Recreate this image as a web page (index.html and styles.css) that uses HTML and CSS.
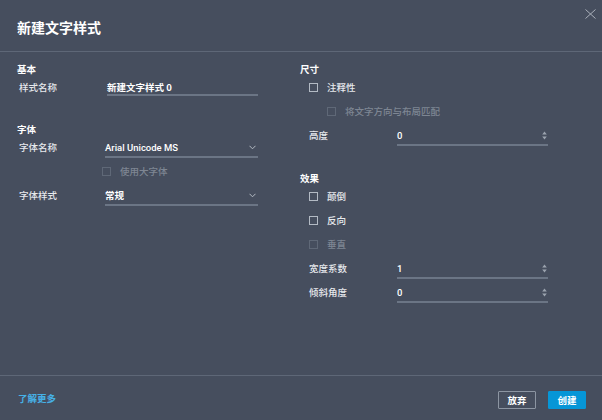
FILE: index.html
```html
<!DOCTYPE html>
<html lang="zh-CN">
<head>
<meta charset="utf-8">
<title>新建文字样式</title>
<link rel="stylesheet" href="styles.css">
</head>
<body>
<div class="dialog">
  <header class="head">
    <h1 class="title">新建文字样式</h1>
    <button class="close" aria-label="关闭">
      <svg width="11" height="10" viewBox="0 0 11 10"><path d="M0.5 0.5 L10.5 9.5 M10.5 0.5 L0.5 9.5" stroke="#a9b0ba" stroke-width="1" fill="none"/></svg>
    </button>
  </header>
  <main class="body">
    <div class="col left">
      <section class="sec">
        <div class="sec-title">基本</div>
        <div class="row">
          <span class="label">样式名称</span>
          <div class="field text"><span class="val">新建文字样式 0</span></div>
        </div>
      </section>
      <section class="sec">
        <div class="sec-title">字体</div>
        <div class="row">
          <span class="label">字体名称</span>
          <div class="field tall select"><span class="val latin">Arial Unicode MS</span>
            <svg class="chev" width="7" height="5" viewBox="0 0 7 5"><path d="M0.5 0.8 L3.5 3.8 L6.5 0.8" stroke="#b4bbc4" stroke-width="1" fill="none"/></svg>
          </div>
        </div>
        <div class="row check-row sub-left">
          <span class="cb disabled"></span><span class="cb-text disabled">使用大字体</span>
        </div>
        <div class="row">
          <span class="label">字体样式</span>
          <div class="field tall select"><span class="val">常规</span>
            <svg class="chev" width="7" height="5" viewBox="0 0 7 5"><path d="M0.5 0.8 L3.5 3.8 L6.5 0.8" stroke="#b4bbc4" stroke-width="1" fill="none"/></svg>
          </div>
        </div>
      </section>
    </div>
    <div class="col right">
      <section class="sec">
        <div class="sec-title">尺寸</div>
        <div class="row check-row">
          <span class="cb"></span><span class="cb-text">注释性</span>
        </div>
        <div class="row check-row sub-right">
          <span class="cb disabled"></span><span class="cb-text disabled">将文字方向与布局匹配</span>
        </div>
        <div class="row">
          <span class="label">高度</span>
          <div class="field tall"><span class="val latin">0</span>
            <svg class="spin" width="5" height="9" viewBox="0 0 5 9"><path d="M0.2 3.6 L2.5 0.6 L4.8 3.6 Z M0.2 5.4 L2.5 8.4 L4.8 5.4 Z" fill="#9ba3ae"/></svg>
          </div>
        </div>
      </section>
      <section class="sec">
        <div class="sec-title">效果</div>
        <div class="row check-row">
          <span class="cb"></span><span class="cb-text">颠倒</span>
        </div>
        <div class="row check-row">
          <span class="cb"></span><span class="cb-text">反向</span>
        </div>
        <div class="row check-row">
          <span class="cb disabled"></span><span class="cb-text disabled">垂直</span>
        </div>
        <div class="row">
          <span class="label">宽度系数</span>
          <div class="field tall"><span class="val latin">1</span>
            <svg class="spin" width="5" height="9" viewBox="0 0 5 9"><path d="M0.2 3.6 L2.5 0.6 L4.8 3.6 Z M0.2 5.4 L2.5 8.4 L4.8 5.4 Z" fill="#9ba3ae"/></svg>
          </div>
        </div>
        <div class="row">
          <span class="label">倾斜角度</span>
          <div class="field tall"><span class="val latin">0</span>
            <svg class="spin" width="5" height="9" viewBox="0 0 5 9"><path d="M0.2 3.6 L2.5 0.6 L4.8 3.6 Z M0.2 5.4 L2.5 8.4 L4.8 5.4 Z" fill="#9ba3ae"/></svg>
          </div>
        </div>
      </section>
    </div>
  </main>
  <footer class="foot">
    <a class="learn" href="#">了解更多</a>
    <div class="actions">
      <button class="btn ghost">放弃</button>
      <button class="btn primary">创建</button>
    </div>
  </footer>
</div>
</body>
</html>
```

FILE: styles.css
```css
* { box-sizing: border-box; margin: 0; padding: 0; }
html, body { width: 602px; height: 420px; overflow: hidden; background: #464e5e; }
body {
  font-family: Roboto, "Noto Sans CJK SC", sans-serif;
  font-size: 9.5px;
  color: #e6e9ed;
}
.dialog {
  width: 602px;
  height: 420px;
  display: flex;
  flex-direction: column;
  position: relative;
}
.head {
  height: 52px;
  border-bottom: 1px solid #5e6777;
  display: flex;
  align-items: center;
  padding: 2px 17px 0;
}
.title {
  font-size: 14px;
  font-weight: 700;
  color: #ffffff;
  font-family: "Noto Sans CJK SC", sans-serif;
}
.close {
  position: absolute;
  top: 9px;
  left: 585px;
  width: 11px;
  height: 10px;
  border: 0;
  background: none;
  display: block;
}
.close svg { display: block; }
.body {
  flex: 1;
  display: flex;
  padding-top: 11px;
}
.col.left { width: 300px; padding-left: 17px; }
.col.right { flex: 1; }
.left .sec + .sec { margin-top: 24px; }
.right .sec + .sec { margin-top: 25px; }
.sec-title {
  height: 12px;
  line-height: 12px;
  font-weight: 700;
  color: #ffffff;
  font-family: "Noto Sans CJK SC", sans-serif;
}
.row {
  height: 24px;
  display: flex;
  align-items: center;
}
.left .row { padding-left: 2px; }
.right .row { padding-left: 9px; }
.label {
  width: 88px;
  flex: none;
  color: #e6e9ed;
  font-weight: 500;
  font-family: "Noto Sans CJK SC", sans-serif;
}
.field {
  width: 151px;
  flex: none;
  display: flex;
  align-items: center;
  border-bottom: 2px solid #6b7585;
  margin-top: 2px;
}
.field.select { width: 153px; margin-left: -2px; }
.field.text { height: 16px; }
.field.tall { height: 19px; }
.val {
  flex: 1;
  color: #ffffff;
  font-weight: 700;
  font-family: "Noto Sans CJK SC", sans-serif;
  white-space: nowrap;
}
.val.latin { font-family: Roboto, "Noto Sans CJK SC", sans-serif; font-weight: 500; }
.chev { display: block; margin-right: 2px; margin-top: 1px; }
.spin { display: block; margin-right: 1px; }
.cb {
  width: 9px;
  height: 9px;
  flex: none;
  border: 1px solid #b3bac4;
  margin-right: 9px;
}
.cb.disabled { border-color: #5f6877; }
.cb-text {
  color: #e6e9ed;
  font-weight: 500;
  font-family: "Noto Sans CJK SC", sans-serif;
}
.cb-text.disabled { color: #7e8693; }
.left .row.sub-left { padding-left: 85px; }
.right .row.sub-right { padding-left: 27px; }
.foot {
  height: 45px;
  border-top: 1px solid #5e6777;
  display: flex;
  align-items: center;
  justify-content: space-between;
  padding: 4px 16px 0 18px;
}
.learn {
  color: #46b1e6;
  font-weight: 700;
  text-decoration: none;
  font-family: "Noto Sans CJK SC", sans-serif;
  margin-bottom: 4px;
}
.actions { display: flex; gap: 12px; }
.btn {
  width: 38px;
  height: 18px;
  font-family: "Noto Sans CJK SC", sans-serif;
  font-size: 9.5px;
  font-weight: 700;
  color: #ffffff;
  border-radius: 1px;
  display: flex;
  align-items: center;
  justify-content: center;
}
.btn.ghost { background: transparent; border: 1px solid #8c95a2; }
.btn.primary { background: #0696d7; border: 1px solid #0696d7; }
```
